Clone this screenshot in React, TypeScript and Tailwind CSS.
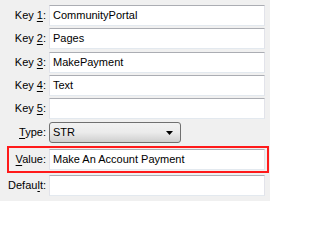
import React from "react";

const Field: React.FC<{ value?: string }> = ({ value = "" }) => (
  <div className="h-[21px] flex-1 flex items-center pl-[3px] bg-white border border-[#e2e3ea] border-t-[#abadb3] border-b-[#e3e9ef] text-black whitespace-nowrap overflow-hidden">
    {value}
  </div>
);

const Label: React.FC<{ pre?: string; key1: string; post?: string; w?: string }> = ({
  pre = "",
  key1,
  post = "",
}) => (
  <span className="text-right">
    {pre}
    <u className="underline-offset-[2px]">{key1}</u>
    {post}:
  </span>
);

export default function App() {
  const keys = ["CommunityPortal", "Pages", "MakePayment", "Text", ""];
  const tops = ["mt-[5px]", "mt-[2px]", "mt-[3px]", "mt-[2px]", "mt-[2px]"];

  return (
    <div
      className="w-[270px] h-[201px] bg-[#f0f0f0] text-[11px] text-black overflow-hidden"
      style={{ fontFamily: '"Liberation Sans", Arial, sans-serif' }}
    >
      {keys.map((v, i) => (
        <div key={i} className={`flex items-center ${tops[i]} w-[265px]`}>
          <div className="w-[46px] text-right">
            <Label pre="Key " key1={String(i + 1)} />
          </div>
          <div className="ml-[3px] flex-1 flex">
            <Field value={v} />
          </div>
        </div>
      ))}

      <div className="flex items-center mt-[3px]">
        <div className="w-[46px] text-right">
          <Label key1="T" post="ype" />
        </div>
        <div className="ml-[3px] w-[132px] h-[21px] rounded-[3px] border border-[#707070] bg-gradient-to-b from-[#f2f2f2] via-[#ebebeb] to-[#cfcfcf] flex items-center pl-[3px] pr-[7px]">
          <span className="flex-1">STR</span>
          <svg width="7" height="4" viewBox="0 0 7 4">
            <path d="M0 0H7L3.5 4Z" fill="#000" />
          </svg>
        </div>
      </div>

      <div className="mt-[3px] ml-[7px] w-[262px] border-2 border-[#ff1a1a] p-[1px] flex items-center">
        <div className="w-[36px] text-right">
          <Label key1="V" post="alue" />
        </div>
        <div className="ml-[3px] flex-1 flex mr-[1px]">
          <Field value="Make An Account Payment" />
        </div>
      </div>

      <div className="flex items-center mt-[2px] w-[265px]">
        <div className="w-[46px] text-right">
          <Label pre="Defau" key1="l" post="t" />
        </div>
        <div className="ml-[3px] flex-1 flex">
          <Field />
        </div>
      </div>
    </div>
  );
}
